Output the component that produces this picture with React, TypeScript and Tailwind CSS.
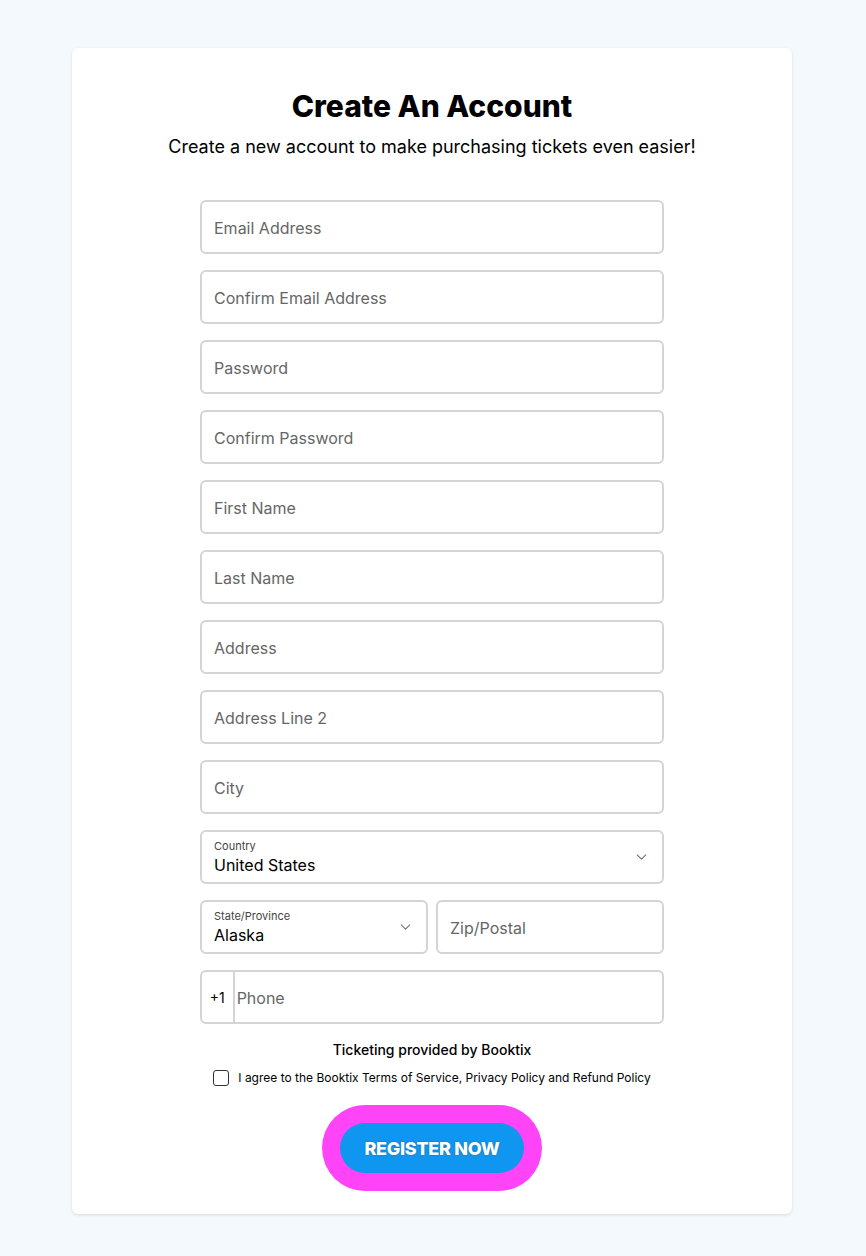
import { ChevronDown } from "lucide-react"

function Field({ placeholder }: { placeholder: string }) {
  return (
    <div className="h-[54px] w-full rounded-md border-2 border-[#d4d4d4] bg-white px-[12px] pt-[2px] flex items-center">
      <input
        className="w-full bg-transparent text-[16px] text-black placeholder:text-[#666] outline-none"
        placeholder={placeholder}
      />
    </div>
  )
}

function SelectBox({ label, value }: { label: string; value: string }) {
  return (
    <div className="relative h-[54px] w-full rounded-md border-2 border-[#d4d4d4] bg-white px-[12px] pt-[7px]">
      <div className="text-[11px] leading-[14px] text-[#444]">{label}</div>
      <div className="mt-[1px] text-[16px] leading-[22px] text-black">{value}</div>
      <ChevronDown className="absolute right-[12px] top-1/2 -translate-y-1/2 text-[#6b7280]" size={17} strokeWidth={1.5} />
    </div>
  )
}

export default function App() {
  return (
    <div className="min-h-[1256px] bg-[#f4f9fe] pt-[48px] pb-[42px]" style={{ fontFamily: "Inter, 'Noto Sans', sans-serif" }}>
      <div className="ml-[72px] w-[720px] rounded-md bg-white pt-[40px] pb-[23px] shadow-[0_1px_3px_rgba(0,0,0,0.12)]">
        <h1 className="text-center text-[30px] leading-[36px] font-extrabold text-black">Create An Account</h1>
        <p className="mt-[11px] text-center text-[18px] leading-[24px] text-black">
          Create a new account to make purchasing tickets even easier!
        </p>

        <div className="mx-auto mt-[41px] flex w-[464px] flex-col gap-[16px]">
          <Field placeholder="Email Address" />
          <Field placeholder="Confirm Email Address" />
          <Field placeholder="Password" />
          <Field placeholder="Confirm Password" />
          <Field placeholder="First Name" />
          <Field placeholder="Last Name" />
          <Field placeholder="Address" />
          <Field placeholder="Address Line 2" />
          <Field placeholder="City" />
          <SelectBox label="Country" value="United States" />
          <div className="flex gap-[8px]">
            <SelectBox label="State/Province" value="Alaska" />
            <Field placeholder="Zip/Postal" />
          </div>
          <div className="flex h-[54px] w-full items-stretch rounded-md border-2 border-[#d4d4d4] bg-white">
            <div className="flex w-[35px] items-center justify-center border-r-2 border-[#d4d4d4] text-[14px] text-black">+1</div>
            <input
              className="w-full bg-transparent pl-[2px] pt-[2px] text-[16px] text-black placeholder:text-[#666] outline-none"
              placeholder="Phone"
            />
          </div>
        </div>

        <p className="mt-[16px] text-center text-[14px] leading-[20px] font-medium text-black">Ticketing provided by Booktix</p>
        <label className="mt-[10px] flex items-center justify-center gap-[9px] text-[12px] leading-[16px] text-black">
          <span className="h-[16px] w-[16px] rounded-[3px] border-[1.5px] border-[#333] bg-white" />
          I agree to the Booktix Terms of Service, Privacy Policy and Refund Policy
        </label>

        <div className="mt-[19px] flex justify-center">
          <div className="rounded-full bg-[#ff44f8] p-[18px]">
            <button className="h-[50px] w-[184px] rounded-full bg-[#0f96f0] text-[18px] font-extrabold tracking-[-0.3px] text-white [text-shadow:0_0_2px_rgba(0,0,0,0.25)]">
              REGISTER NOW
            </button>
          </div>
        </div>
      </div>
    </div>
  )
}
